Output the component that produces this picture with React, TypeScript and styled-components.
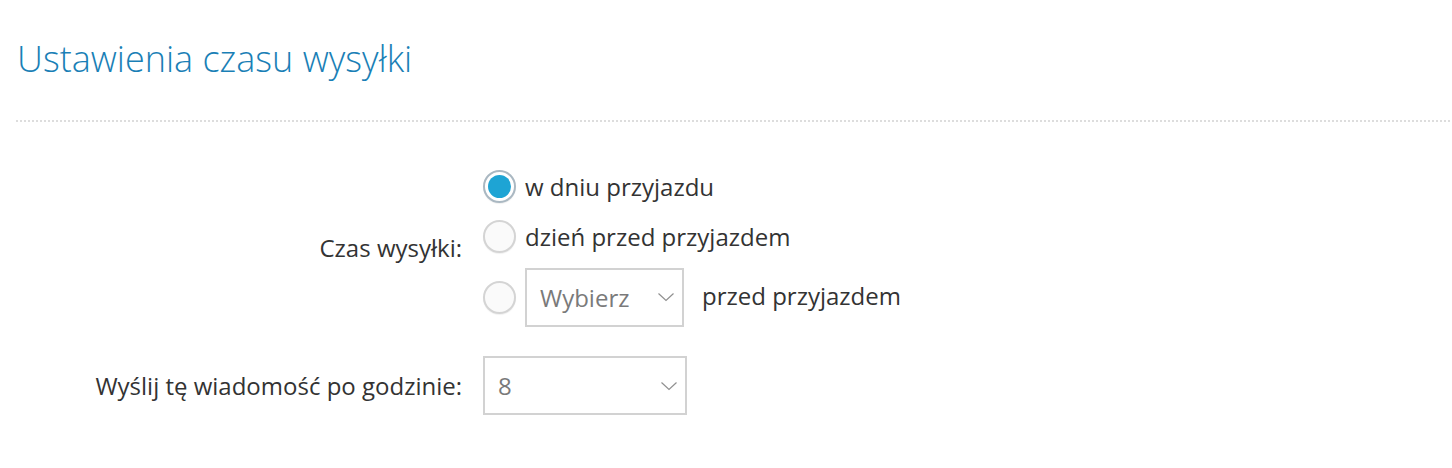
import styled, { createGlobalStyle } from "styled-components";

const GlobalStyle = createGlobalStyle`
  body {
    margin: 0;
    background: #ffffff;
    font-family: "Open Sans", "Liberation Sans", sans-serif;
    color: #333333;
  }
`;

const Page = styled.div`
  padding: 34px 0 0 16px;
`;

const Title = styled.h1`
  margin: 0;
  padding-left: 1px;
  font-size: 36px;
  line-height: 50px;
  font-weight: 300;
  color: #1a7fb6;
`;

const Divider = styled.div`
  margin-top: 36px;
  height: 2px;
  background-image: linear-gradient(to right, #dddddd 50%, transparent 50%);
  background-size: 4px 2px;
  background-repeat: repeat-x;
`;

const Form = styled.div`
  display: grid;
  grid-template-columns: 446px auto;
  column-gap: 21px;
  row-gap: 30px;
  align-items: center;
  margin-top: 46px;
`;

const Label = styled.div`
  text-align: right;
  font-size: 24px;
  color: #333333;
`;

const RadioGroup = styled.div`
  display: flex;
  flex-direction: column;
  gap: 14px;
`;

const RadioRow = styled.label<{ $tall?: boolean }>`
  display: flex;
  align-items: center;
  height: ${(p) => (p.$tall ? "58px" : "36px")};
  font-size: 24px;
  color: #333333;
  cursor: pointer;
  white-space: nowrap;
`;

const Radio = styled.span<{ $checked?: boolean }>`
  box-sizing: border-box;
  width: 33px;
  height: 33px;
  border-radius: 50%;
  flex-shrink: 0;
  margin-right: 9px;
  border: 2px solid ${(p) => (p.$checked ? "#aab8c2" : "#d4d4d4")};
  background: ${(p) => (p.$checked ? "#ffffff" : "#fafafa")};
  box-shadow: 0 1px 1px rgba(0, 0, 0, 0.06);
  display: flex;
  align-items: center;
  justify-content: center;

  &::after {
    content: "";
    display: ${(p) => (p.$checked ? "block" : "none")};
    width: 23px;
    height: 23px;
    border-radius: 50%;
    background: #1ea4d4;
  }
`;

const Select = styled.div<{ $width: number }>`
  box-sizing: border-box;
  width: ${(p) => p.$width}px;
  height: 59px;
  border: 2px solid #d2d2d2;
  display: flex;
  align-items: center;
  justify-content: space-between;
  padding: 0 7px 0 13px;
  font-size: 24px;
  color: #7a7a7a;
  background: #ffffff;
`;

const After = styled.span`
  margin-left: 18px;
  margin-bottom: 3px;
`;

const Chevron = () => (
  <svg width="18" height="10" viewBox="0 0 18 10">
    <path d="M1.5 1.5 L9 8.5 L16.5 1.5" fill="none" stroke="#909090" strokeWidth="1.2" />
  </svg>
);

export default function App() {
  return (
    <>
      <GlobalStyle />
      <Page>
        <Title>Ustawienia czasu wysyłki</Title>
        <Divider />
        <Form>
          <Label>Czas wysyłki:</Label>
          <RadioGroup>
            <RadioRow>
              <Radio $checked />
              w dniu przyjazdu
            </RadioRow>
            <RadioRow>
              <Radio />
              dzień przed przyjazdem
            </RadioRow>
            <RadioRow $tall>
              <Radio />
              <Select $width={159}>
                Wybierz
                <Chevron />
              </Select>
              <After>przed przyjazdem</After>
            </RadioRow>
          </RadioGroup>
          <Label>Wyślij tę wiadomość po godzinie:</Label>
          <div>
            <Select $width={204}>
              8
              <Chevron />
            </Select>
          </div>
        </Form>
      </Page>
    </>
  );
}
